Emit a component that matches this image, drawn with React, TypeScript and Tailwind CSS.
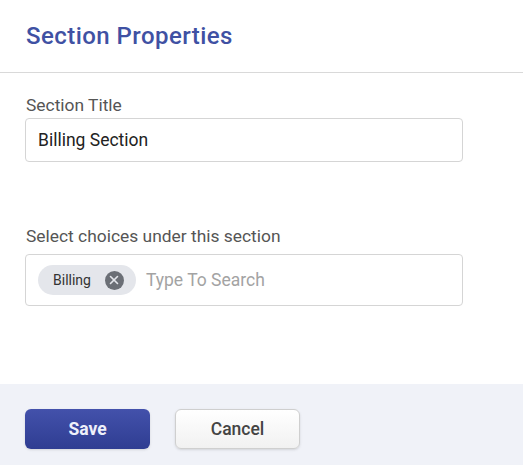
import { X } from "lucide-react";

export default function App() {
  return (
    <div className="w-[523px] h-[465px] bg-white flex flex-col overflow-hidden font-['Roboto',sans-serif]">
      <div className="h-[73px] border-b border-[#d9d9d9] px-[25px] flex items-center">
        <h1 className="text-[24px] font-medium text-[#3f51a3] tracking-[0.45px] pl-px">Section Properties</h1>
      </div>

      <div className="flex-1 px-[25px] pt-[22px]">
        <label className="block text-[17.4px] leading-[20px] text-[#555] pl-px">Section Title</label>
        <input
          readOnly
          value="Billing Section"
          className="mt-[3px] w-[438px] h-[44px] border border-[#d5d5d5] rounded-[4px] px-[12px] text-[17.5px] text-[#222] outline-none"
        />

        <label className="block mt-[64px] text-[17.4px] leading-[20px] text-[#555] pl-px">Select choices under this section</label>
        <div className="mt-[8px] w-[438px] h-[52px] border border-[#d5d5d5] rounded-[4px] px-[12px] flex items-center gap-[10px]">
          <div className="h-[30px] rounded-full bg-[#e4e6eb] pl-[15px] pr-[12px] flex items-center gap-[14px]">
            <span className="text-[14px] text-[#333]">Billing</span>
            <span className="w-[19px] h-[19px] rounded-full bg-[#6b6f76] flex items-center justify-center">
              <X size={14} strokeWidth={2.75} className="text-[#e4e6eb]" />
            </span>
          </div>
          <span className="text-[17.5px] text-[#a3a3a3]">Type To Search</span>
        </div>
      </div>

      <div className="h-[81px] bg-[#f0f2f8] px-[25px] pt-[25px] flex items-start gap-[25px]">
        <button className="w-[125px] h-[40px] rounded-[6px] bg-gradient-to-b from-[#4351ab] to-[#2f3d92] text-[#eef0fa] text-[17.5px] font-bold shadow-sm">
          Save
        </button>
        <button className="w-[125px] h-[40px] rounded-[6px] border border-[#cfcfcf] bg-gradient-to-b from-white to-[#f1f1f1] text-[#444] text-[17.5px] font-medium shadow-sm">
          Cancel
        </button>
      </div>
    </div>
  );
}
